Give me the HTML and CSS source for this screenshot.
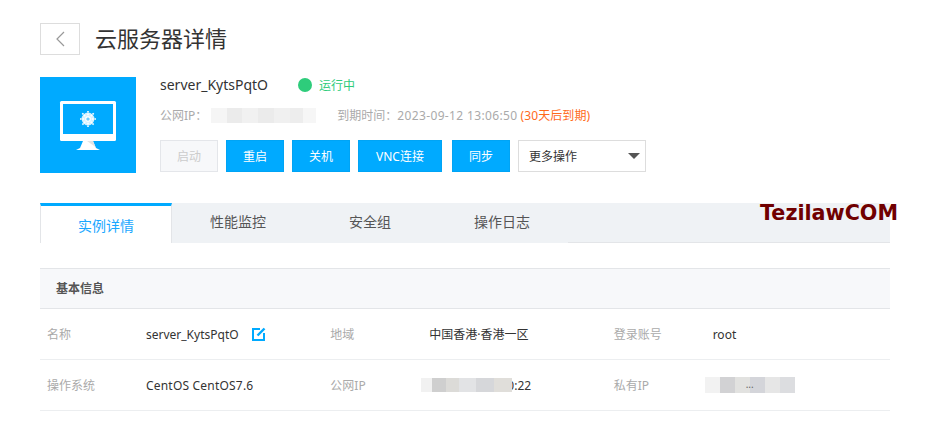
FILE: index.html
```html
<!DOCTYPE html>
<html lang="zh-CN">
<head>
  <meta charset="UTF-8">
  <title>云服务器详情</title>
  <link rel="stylesheet" href="styles.css">
</head>
<body>
  <div class="page">
    <!-- 标题 -->
    <div class="title-bar">
      <a class="back-btn">
        <svg width="10" height="16" viewBox="0 0 10 16"><path d="M9 1 L2 8 L9 15" fill="none" stroke="#999" stroke-width="1.2"/></svg>
      </a>
      <h1>云服务器详情</h1>
    </div>

    <!-- 实例概要 -->
    <div class="summary">
      <div class="server-icon">
        <svg width="96" height="96" viewBox="0 0 96 96">
          <rect x="20" y="24" width="56" height="40" rx="1.5" fill="#fff"/>
          <rect x="23" y="27" width="50" height="30" fill="#00aaff"/>
          <path d="M43 64 H53 L56 71 L60 73 H36 L40 71 Z" fill="#fff"/>
          <path d="M47 64 H53 L55.5 70 Z" fill="#e4e4e4"/>
          <circle cx="48" cy="42" r="6.4" fill="#d6f1ff"/>
          <g stroke="#fff" stroke-width="1.6" stroke-dasharray="1.6 0.8">
            <path d="M48 34 V50 M40 42 H56 M42.3 36.3 L53.7 47.7 M53.7 36.3 L42.3 47.7"/>
          </g>
          <circle cx="48" cy="42" r="1.6" fill="#6fcdff"/>
        </svg>
      </div>
      <div class="summary-info">
        <div class="name-line">
          <span class="server-name">server_KytsPqtO</span>
          <span class="status-dot"></span>
          <span class="status-text">运行中</span>
        </div>
        <div class="meta-line">
          <span>公网IP：</span>
          <span class="mosaic mosaic-ip"></span>
          <span>到期时间：<span class="date-text">2023-09-12 13:06:50</span> <em class="expire">(30天后到期)</em></span>
        </div>
        <div class="actions">
          <button class="btn btn-disabled">启动</button>
          <button class="btn">重启</button>
          <button class="btn">关机</button>
          <button class="btn btn-wide">VNC连接</button>
          <button class="btn">同步</button>
          <div class="select-more">
            <span>更多操作</span>
            <i class="caret"></i>
          </div>
        </div>
      </div>
    </div>

    <!-- 标签页 -->
    <div class="tabs">
      <div class="tab active">实例详情</div>
      <div class="tab">性能监控</div>
      <div class="tab">安全组</div>
      <div class="tab">操作日志</div>
      <div class="watermark">TezilawCOM</div>
    </div>

    <!-- 基本信息 -->
    <div class="section-head">基本信息</div>
    <div class="info-row">
      <div class="info-cell">
        <span class="info-label">名称</span>
        <span class="info-value">server_KytsPqtO
          <svg class="edit-icon" width="14" height="14" viewBox="0 0 14 14"><path d="M8 2 H1 V13 H12 V6" fill="none" stroke="#00aaff" stroke-width="2"/><path d="M5.5 8.5 L12.5 1.5" stroke="#00aaff" stroke-width="2.4"/></svg>
        </span>
      </div>
      <div class="info-cell">
        <span class="info-label">地域</span>
        <span class="info-value">中国香港·香港一区</span>
      </div>
      <div class="info-cell">
        <span class="info-label">登录账号</span>
        <span class="info-value">root</span>
      </div>
    </div>
    <div class="info-row">
      <div class="info-cell">
        <span class="info-label">操作系统</span>
        <span class="info-value os-text">CentOS CentOS7.6</span>
      </div>
      <div class="info-cell">
        <span class="info-label">公网IP</span>
        <span class="info-value">
          <span class="mosaic mosaic-public"></span><span class="port">0:22</span>
        </span>
      </div>
      <div class="info-cell">
        <span class="info-label">私有IP</span>
        <span class="info-value">
          <span class="mosaic mosaic-private"><span class="dots">...</span></span>
        </span>
      </div>
    </div>
  </div>
</body>
</html>
```

FILE: styles.css
```css
/* 全局重置 */
* { margin: 0; padding: 0; box-sizing: border-box; }
body {
  font-family: "Noto Sans", "Noto Sans CJK SC", sans-serif;
  font-size: 12px;
  background: #fff;
  color: #333;
  overflow: hidden;
}
.page {
  width: 850px;
  margin-left: 40px;
  padding-top: 23px;
}
.date-text {
  letter-spacing: 0.35px;
}
.os-text {
  letter-spacing: 0.2px;
}
/* 标题 */
.title-bar {
  display: flex;
  align-items: center;
  height: 32px;
}
.back-btn {
  display: flex;
  align-items: center;
  justify-content: center;
  width: 40px;
  height: 32px;
  border: 1px solid #ddd;
}
.title-bar h1 {
  margin: -2px 0 0 15px;
  font-size: 22px;
  font-weight: 400;
  line-height: 32px;
  color: #333;
}
/* 实例概要 */
.summary {
  display: flex;
  margin-top: 22px;
}
.server-icon {
  width: 96px;
  height: 96px;
  background: #00aaff;
}
.summary-info {
  margin-left: 24px;
}
.name-line {
  display: flex;
  align-items: center;
  height: 16px;
}
.server-name {
  width: 138px;
  margin-top: -2px;
  font-size: 14px;
}
.status-dot {
  width: 14px;
  height: 14px;
  border-radius: 50%;
  background: #2ecc7b;
}
.status-text {
  margin-left: 7px;
  color: #2ecc7b;
}
.meta-line {
  display: flex;
  align-items: center;
  height: 16px;
  margin-top: 14px;
  color: #aaa;
}
.expire {
  font-style: normal;
  letter-spacing: 0.1px;
  color: #ff6a1a;
}
.mosaic {
  display: inline-block;
  background: linear-gradient(90deg, #f5f5f5 0 15%, #ebebeb 15% 30%, #f1f1f1 30% 45%, #ebebeb 45% 60%, #f0f0f0 60% 75%, #ededed 75% 88%, #f6f6f6 88%);
}
.mosaic-ip {
  width: 105px;
  height: 15px;
  margin: 0 21px 0 4px;
}
/* 操作按钮 */
.actions {
  display: flex;
  margin-top: 17px;
}
.btn {
  width: 58px;
  height: 32px;
  margin-right: 8px;
  border: 1px solid #00a4f5;
  background: #00aaff;
  color: #fff;
  font: inherit;
  font-size: 12px;
}
.btn-wide {
  width: 84px;
  margin-right: 10px;
}
.btn-disabled {
  border-color: #e4e6ea;
  background: #f7f8fa;
  color: #ccc;
}
.select-more {
  display: flex;
  align-items: center;
  justify-content: space-between;
  width: 128px;
  height: 32px;
  padding: 0 5px 0 10px;
  border: 1px solid #ddd;
}
.caret {
  border-top: 6px solid #555;
  border-left: 6px solid transparent;
  border-right: 6px solid transparent;
}
/* 标签页 */
.tabs {
  position: relative;
  display: flex;
  height: 40px;
  margin-top: 30px;
  background: #eff2f5;
  border-bottom: 1px solid #e3e5e8;
}
.tab {
  width: 132px;
  height: 40px;
  font-size: 14px;
  line-height: 38px;
  text-align: center;
  color: #555;
  background: #eff2f5;
}
.tab.active {
  border-top: 3px solid #00aaff;
  border-left: 1px solid #e3e5e8;
  border-right: 1px solid #e3e5e8;
  line-height: 40px;
  color: #1aa7ff;
  background: #fff;
}
.watermark {
  position: absolute;
  top: -2px;
  left: 720px;
  font-family: "DejaVu Sans", sans-serif;
  font-size: 20.7px;
  font-weight: 700;
  line-height: 24px;
  white-space: nowrap;
  color: #700000;
}
/* 基本信息 */
.section-head {
  height: 41px;
  margin-top: 25px;
  padding-left: 16px;
  border-top: 1px solid #e3e5e8;
  border-bottom: 1px solid #e3e5e8;
  background: #f7f8fa;
  font-weight: 700;
  line-height: 39px;
  color: #555;
}
.info-row {
  display: flex;
  height: 51px;
  border-bottom: 1px solid #eceef0;
}
.info-cell {
  display: flex;
  align-items: center;
  flex: 1;
}
.info-label {
  width: 106px;
  padding-left: 7px;
  color: #aaa;
}
.info-value {
  position: relative;
  display: flex;
  align-items: center;
  color: #333;
  white-space: nowrap;
}
.edit-icon {
  margin-left: 13px;
}
.mosaic-public {
  position: relative;
  z-index: 1;
  width: 91px;
  height: 14px;
  margin-left: -8px;
  background: linear-gradient(90deg, #f1f1f1 0 12%, #cfcfcf 12% 27%, #dcdbd8 27% 42%, #e2e3e5 42% 60%, #d6d7da 60% 80%, #e0deda 80%);
}
.port {
  margin-left: -5px;
}
.mosaic-private {
  width: 90px;
  height: 16px;
  margin-left: -8px;
  text-align: center;
  line-height: 14px;
  background: linear-gradient(90deg, #f2f2f2 0 17%, #d2d2d4 17% 33%, #e2e2e0 33% 50%, #d4d5da 50% 67%, #e6e6e6 67% 83%, #dcdde0 83%);
}
.dots {
  color: #666;
  font-size: 10px;
}
```
